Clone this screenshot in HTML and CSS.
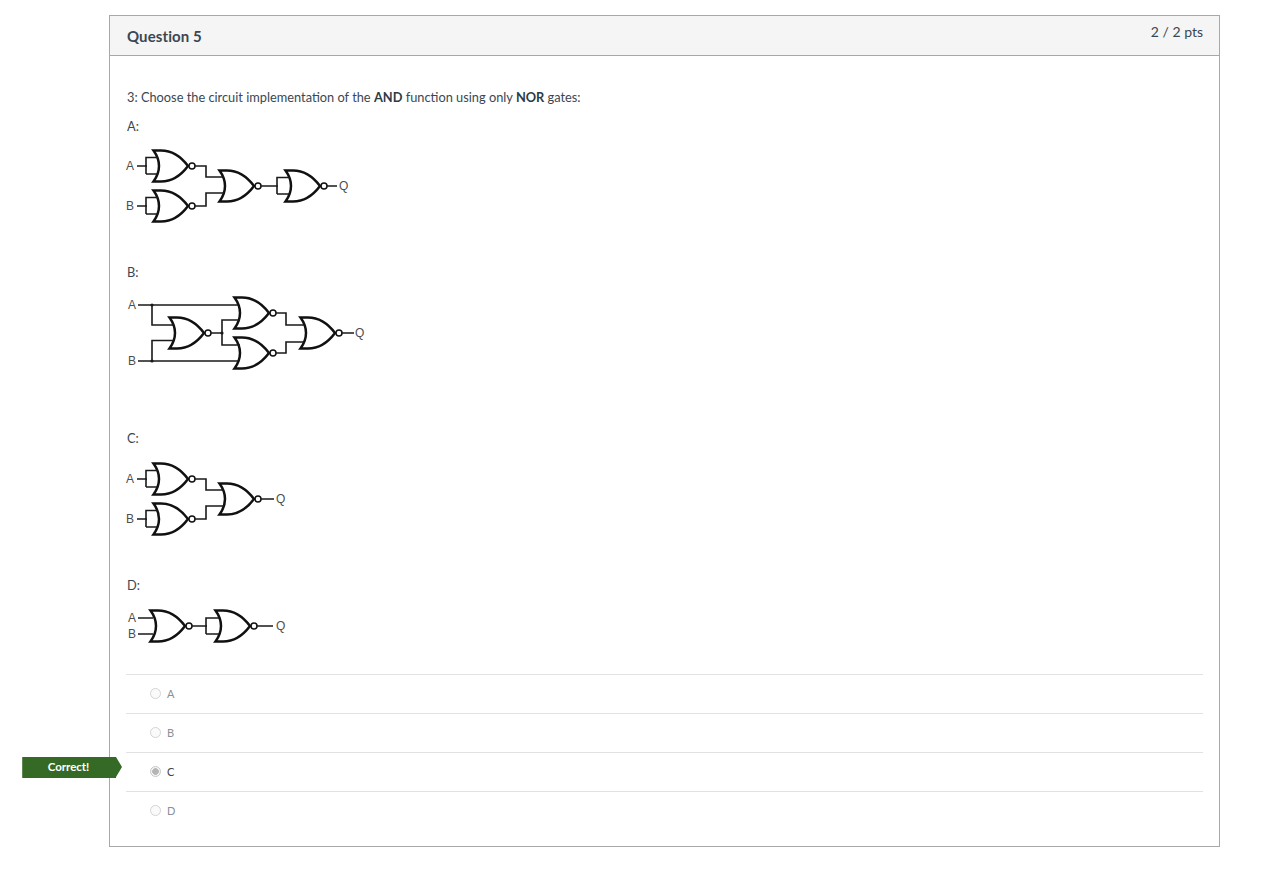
FILE: index.html
```html
<!DOCTYPE html>
<html lang="en">
<head>
<meta charset="utf-8">
<title>Question 5</title>
<link rel="stylesheet" href="styles.css">
</head>
<body>
<main class="page">
  <section class="card">
    <header class="card-head">
      <h2 class="title">Question 5</h2>
      <div class="pts">2 / 2 pts</div>
    </header>
    <div class="card-body">
      <p class="prompt">3: Choose the circuit implementation of the <strong>AND</strong> function using only <strong>NOR</strong> gates:</p>

      <p class="label">A:</p>
      <svg class="fig fig-a" viewBox="120 136 300 126" aria-label="Circuit A">
        <defs>
          <g id="nor">
            <path class="gate" d="M1.5,-15.5 H9 C21,-15.5 30,-8 36,0 C30,8 21,15.5 9,15.5 H1.5 Q7,8 7,0 Q7,-8 1.5,-15.5 Z"/>
            <circle class="bubble" cx="40" cy="0" r="3"/>
          </g>
        </defs>
        <use href="#nor" x="152" y="166"/>
        <use href="#nor" x="152" y="206"/>
        <use href="#nor" x="218" y="186"/>
        <use href="#nor" x="284" y="186"/>
        <path class="wire" d="M137,166 H147 M146,174 V157.5 H158 M146,174 H158"/>
        <path class="wire" d="M137,206 H147 M146,214 V197.5 H158 M146,214 H158"/>
        <path class="wire" d="M195,166 H206 V177 H224 M195,206 H206 V193 H224"/>
        <path class="wire" d="M261,186 H278 M277,194 V177.5 H290 M277,194 H290 M327,186 H337"/>
        <text class="sig" x="126" y="170">A</text>
        <text class="sig" x="126" y="210">B</text>
        <text class="sig" x="339" y="190">Q</text>
      </svg>

      <p class="label">B:</p>
      <svg class="fig fig-b" viewBox="120 282 300 146" aria-label="Circuit B">
        <use href="#nor" x="168" y="333"/>
        <use href="#nor" x="233" y="313"/>
        <use href="#nor" x="233" y="353"/>
        <use href="#nor" x="299" y="333"/>
        <path class="wire" d="M138,305 H238 M152,305 V325 H174 M138,361 H238 M152,361 V340.5 H174"/>
        <path class="wire" d="M211,333 H222 M222,333 V320 H240 M222,333 V345 H240"/>
        <path class="wire" d="M276,313 H286 V325 H304 M276,353 H286 V342 H304 M341,333 H354"/>
        <circle class="dot" cx="152" cy="305" r="1.6"/>
        <circle class="dot" cx="152" cy="361" r="1.6"/>
        <circle class="dot" cx="222" cy="333" r="1.6"/>
        <text class="sig" x="128" y="309">A</text>
        <text class="sig" x="128" y="365">B</text>
        <text class="sig" x="355" y="337">Q</text>
      </svg>

      <p class="label">C:</p>
      <svg class="fig fig-c" viewBox="120 448 300 127" aria-label="Circuit C">
        <use href="#nor" x="152" y="479"/>
        <use href="#nor" x="152" y="519"/>
        <use href="#nor" x="218" y="499"/>
        <path class="wire" d="M137,479 H147 M146,487 V470.5 H158 M146,487 H158"/>
        <path class="wire" d="M137,519 H147 M146,527 V510.5 H158 M146,527 H158"/>
        <path class="wire" d="M195,479 H206 V490 H224 M195,519 H206 V506 H224 M261,499 H274"/>
        <text class="sig" x="126" y="483">A</text>
        <text class="sig" x="126" y="523">B</text>
        <text class="sig" x="276" y="503">Q</text>
      </svg>

      <p class="label">D:</p>
      <svg class="fig fig-d" viewBox="120 595 300 79" aria-label="Circuit D">
        <use href="#nor" x="149" y="626"/>
        <use href="#nor" x="214" y="626"/>
        <path class="wire" d="M138,618 H153 M138,634 H153"/>
        <path class="wire" d="M192,626 H207 M206,634 V618 H219 M206,634 H219 M257,626 H273"/>
        <text class="sig" x="128" y="622">A</text>
        <text class="sig" x="128" y="638">B</text>
        <text class="sig" x="276" y="630">Q</text>
      </svg>

      <ul class="answers">
        <li class="answer"><span class="radio"></span><span class="answer-text">A</span></li>
        <li class="answer"><span class="radio"></span><span class="answer-text">B</span></li>
        <li class="answer answer-chosen">
          <span class="flag">Correct!</span>
          <span class="radio radio-on"></span><span class="answer-text">C</span>
        </li>
        <li class="answer"><span class="radio"></span><span class="answer-text">D</span></li>
      </ul>
    </div>
  </section>
</main>
</body>
</html>
```
FILE: styles.css
```css
* { box-sizing: border-box; }

body {
  margin: 0;
  background: #fff;
  color: #3a4751;
  font-family: Lato, "Open Sans", "Liberation Sans", sans-serif;
  font-size: 12.8px;
}

.page { padding: 15px 53px 23px 109px; }

.card { border: 1px solid #a8a8a8; }

.card-head {
  display: flex;
  justify-content: space-between;
  height: 40px;
  padding: 0 16px;
  background: #f5f5f5;
  border-bottom: 1px solid #a8a8a8;
}

.title {
  margin: 0;
  padding-left: 1px;
  font-size: 15px;
  font-weight: 700;
  line-height: 41px;
  letter-spacing: 0.1px;
  color: #3a4751;
}

.pts {
  font-size: 14px;
  line-height: 32px;
}

.card-body { padding: 31px 16px 16px; }

.prompt, .label {
  margin: 0;
  padding-left: 1px;
  line-height: 20px;
}

.prompt { margin-bottom: 9px; }

.prompt strong { font-weight: 700; color: #2d3b45; }

.fig {
  display: block;
  width: 300px;
  margin-left: -6px;
}

.fig-a { height: 126px; }
.fig-b { height: 146px; }
.fig-c { height: 127px; }
.fig-d { height: 79px; }

.gate { fill: #fff; stroke: #111; stroke-width: 2.5; stroke-linejoin: miter; }
.bubble { fill: #fff; stroke: #111; stroke-width: 1.5; }
.wire { fill: none; stroke: #1a1a1a; stroke-width: 1.6; }
.dot { fill: #1a1a1a; }
.sig { font-family: "Liberation Sans", sans-serif; font-size: 12px; fill: #4d4d4d; }

.answers { list-style: none; margin: 0; padding: 0; }

.answer {
  position: relative;
  display: flex;
  align-items: center;
  height: 39px;
  padding: 0 0 1px 24px;
  border-top: 1px solid #e2e2e2;
}

.radio {
  width: 11px;
  height: 11px;
  margin-right: 6px;
  border: 1px solid #d4d4d4;
  border-radius: 50%;
  background: #fafafa;
}

.radio-on {
  border-color: #c8c8c8;
  background: radial-gradient(circle, #b5b5b5 0 3px, #f4f4f4 3.6px);
}

.answer-text {
  font-size: 11px;
  color: #8a9096;
}

.answer-chosen .answer-text { color: #444; }

.flag {
  position: absolute;
  left: -104px;
  top: 4px;
  width: 94px;
  height: 21px;
  padding-right: 2px;
  background: #356a26;
  border-left: 1px solid #5e8a52;
  color: #fff;
  font-size: 11.5px;
  font-weight: 700;
  line-height: 20px;
  text-align: center;
}

.flag::after {
  content: "";
  position: absolute;
  left: 93px;
  top: 0;
  border-left: 6px solid #356a26;
  border-top: 10.5px solid transparent;
  border-bottom: 10.5px solid transparent;
}
```
